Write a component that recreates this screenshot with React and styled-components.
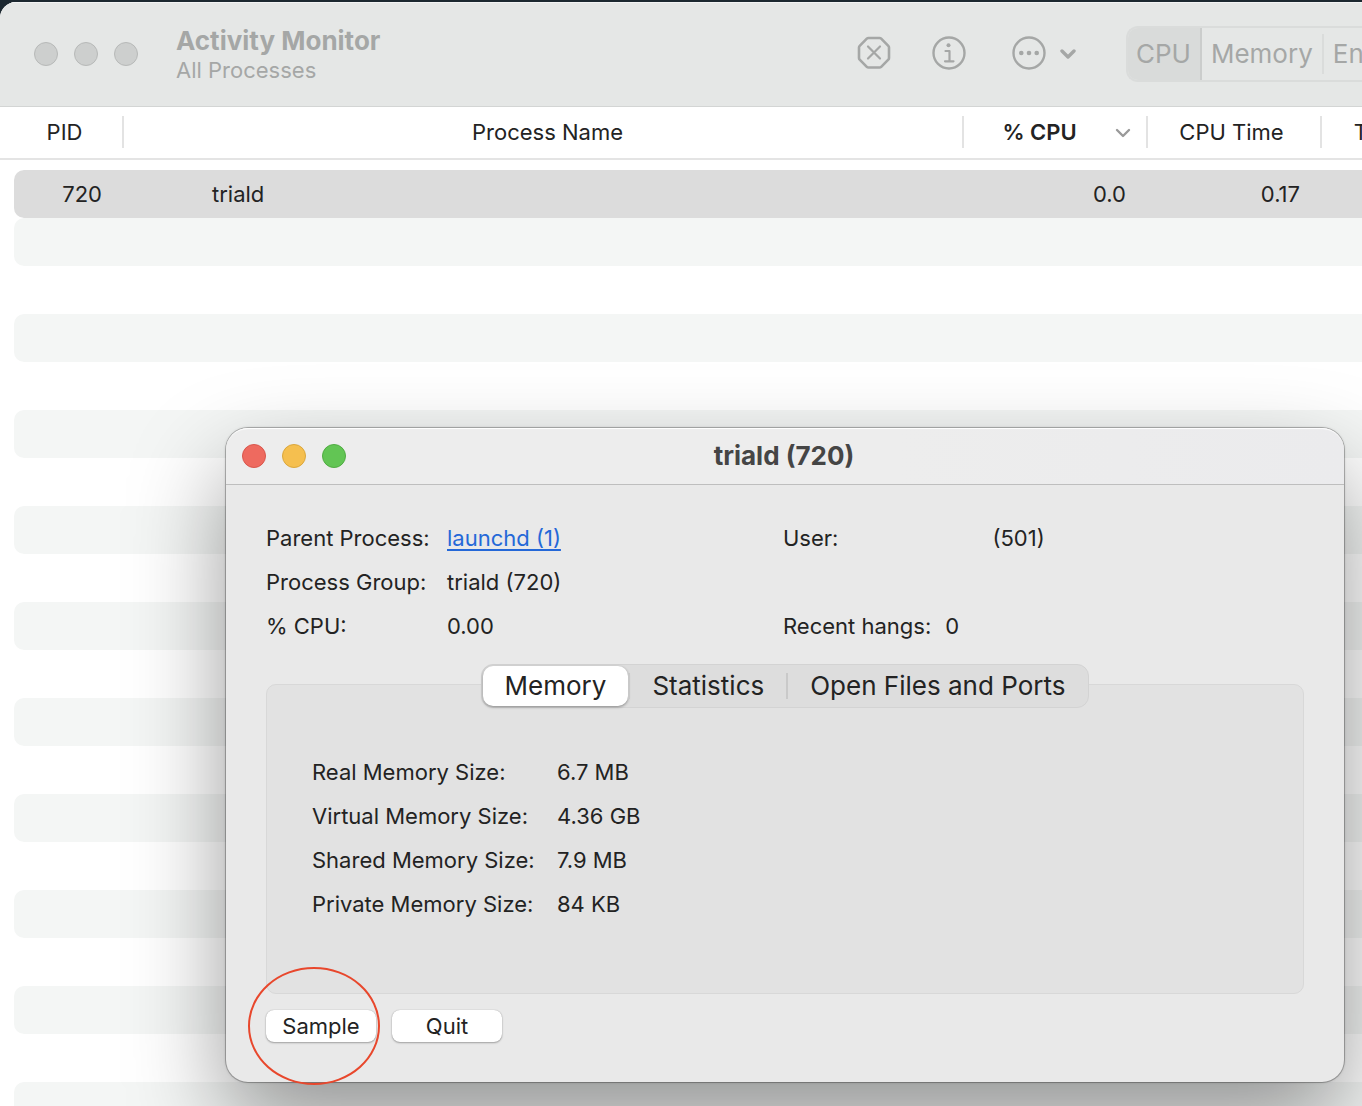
import { useState } from "react";
import styled, { createGlobalStyle, css } from "styled-components";

const GlobalStyle = createGlobalStyle`
	* {
		box-sizing: border-box;
	}

	body {
		margin: 0;
		background-color: #1c2830;
		color: #232323;
		font-family: Inter, "Liberation Sans", sans-serif;
		font-size: 22px;
		line-height: 28px;
	}

	button {
		border: 0;
		padding: 0;
		background: none;
		color: inherit;
		font: inherit;
	}
`;

const Desktop = styled.div`
	position: relative;
	height: 100vh;
	padding-top: 2px;
	overflow: hidden;
`;

const MainWindow = styled.main`
	min-height: 100%;
	background-color: #fff;
	border-top-left-radius: 16px;
	overflow: hidden;
`;

const Toolbar = styled.header`
	height: 105px;
	padding: 0 0 2px 34px;
	display: flex;
	align-items: center;
	background-color: #e5e7e6;
	border-top: 1px solid #f3f4f4;
	border-bottom: 1px solid #d3d5d4;
	color: #a5a7a6;
`;

const TrafficLights = styled.div`
	display: flex;
	gap: 16px;
`;

const Light = styled.button`
	width: 24px;
	height: 24px;
	border-radius: 50%;
	background-color: ${({ $color }) => $color};
	border: 1px solid ${({ $edge }) => $edge};
`;

const Titles = styled.div`
	margin-left: 38px;
	padding-top: 2px;
	flex: 1;
	white-space: nowrap;
`;

const WindowTitle = styled.h1`
	margin: 0;
	font-size: 26px;
	line-height: 30px;
	font-weight: 700;
`;

const Subtitle = styled.p`
	margin: 0;
`;

const Actions = styled.div`
	display: flex;
	align-items: center;
	margin-right: 50px;
	padding-bottom: 2px;
`;

const IconButton = styled.button`
	display: flex;
	align-items: center;
	gap: 14px;
	margin-left: ${({ $gap }) => $gap || 0}px;

	svg {
		display: block;
	}
`;

const ViewSwitch = styled.div`
	width: 236px;
	height: 56px;
	display: flex;
	align-items: center;
	border: 2px solid #dadcdb;
	border-right: 0;
	border-radius: 12px 0 0 12px;
	overflow: hidden;
	font-size: 26px;
`;

const ViewButton = styled.button`
	flex: none;
	height: 40px;
	padding: 0 9px;
	border-right: 2px solid #dadcdb;

	${({ $active }) =>
		$active &&
		css`
			height: 56px;
			padding: 0 9px 0 8px;
			background-color: #d9dbda;
			border-right-color: #cbcdcc;
		`}
`;

const ProcessTable = styled.table`
	width: calc(100% + 116px);
	table-layout: fixed;
	border-collapse: separate;
	border-spacing: 0;

	tbody::before {
		content: "";
		display: block;
		height: 10px;
	}
`;

const HeadCell = styled.th`
	width: ${({ $width }) => ($width ? `${$width}px` : "auto")};
	padding: 9px 0 10px;
	border-bottom: 2px solid #e4e4e4;
	font-weight: ${({ $sorted }) => ($sorted ? 600 : 400)};
`;

const HeadLabel = styled.div`
	height: 32px;
	display: flex;
	align-items: center;
	border-right: 2px solid #e3e3e3;
	padding-left: ${({ $left }) => $left || 0}px;
	padding-right: ${({ $right }) => $right || 0}px;

	span {
		flex: 1;
		text-align: center;
	}
`;

const Row = styled.tr`
	height: 48px;

	td {
		padding: 0 22px;
		background-color: ${({ $selected }) => ($selected ? "#dcdcdc" : "transparent")};
		text-align: right;
	}

	&:nth-child(even) td {
		background-color: #f4f6f5;
	}

	td:first-child {
		border-left: 14px solid transparent;
		border-radius: 24px 0 0 24px / 10px 0 0 10px;
		background-clip: padding-box;
	}

	td:nth-child(2) {
		padding-left: 88px;
		text-align: left;
	}
`;

const Dialog = styled.section`
	position: absolute;
	top: 428px;
	left: 226px;
	right: 18px;
	border-radius: 22px;
	background-color: #e9e9e9;
	box-shadow:
		0 0 0 1px rgba(0, 0, 0, 0.22),
		0 0 3px rgba(0, 0, 0, 0.25),
		0 42px 96px rgba(0, 0, 0, 0.4);
`;

const TitleBar = styled.header`
	height: 57px;
	padding: 0 18px 0 16px;
	display: grid;
	grid-template-columns: 1fr auto 1fr;
	align-items: center;
	border-radius: 22px 22px 0 0;
	background: linear-gradient(90deg, #ededed 60%, #ebebed);
	border-bottom: 1px solid #bebebe;
	box-shadow: inset 0 2px 1px -1px #fff;
`;

const DialogTitle = styled.h2`
	margin: 0;
	color: #454545;
	font-size: 26px;
	line-height: 30px;
	font-weight: 700;
`;

const DialogBody = styled.div`
	padding: 31px 40px 40px;
`;

const Summary = styled.div`
	display: grid;
	grid-template-columns: 517px 1fr;
`;

const Details = styled.dl`
	margin: 0;
	display: grid;
	grid-template-columns: ${({ $label }) => $label}px 1fr;
	grid-auto-rows: 44px;
	align-items: center;

	dt,
	dd {
		margin: 0;
		white-space: nowrap;
	}
`;

const InlineDetails = styled.dl`
	margin: 0;
	display: grid;
	grid-auto-rows: 44px;
	align-items: center;

	div {
		display: flex;
		gap: 14px;
	}

	dd {
		margin: 0;
	}
`;

// the account name is blank, only the uid follows it
const UserId = styled.dd`
	&& {
		padding-left: 140px;
	}
`;

const ParentLink = styled.a`
	color: #2468d8;
	text-underline-offset: 3px;
	text-decoration-thickness: 2px;
`;

const Tabs = styled.div`
	position: relative;
	width: fit-content;
	height: 44px;
	margin: 16px auto -24px;
	padding: 1px;
	display: flex;
	align-items: center;
	border: 1px solid #d3d3d3;
	border-radius: 12px;
	background-color: #dddddd;
	font-size: 26px;
`;

const Tab = styled.button`
	height: 26px;
	padding: 0 22px;
	display: flex;
	align-items: center;

	& + & {
		border-left: 2px solid #c9c9c9;
	}

	${({ $active }) =>
		$active &&
		css`
			height: 40px;
			border-radius: 10px;
			background-color: #fff;
			box-shadow: 0 1px 3px rgba(0, 0, 0, 0.4);

			& + button {
				border-left-color: transparent;
			}
		`}
`;

const Panel = styled.div`
	padding: 65px 45px 67px;
	border: 1px solid #d8d8d8;
	border-radius: 10px;
	background-color: #e2e2e2;
`;

const Footer = styled.footer`
	margin-top: 16px;
	display: flex;
	gap: 16px;
`;

const Marked = styled.div`
	position: relative;
`;

const Ring = styled.span`
	position: absolute;
	top: -43px;
	left: -18px;
	width: 132px;
	height: 118px;
	border: 2px solid #e8472c;
	border-radius: 50%;
	pointer-events: none;
`;

const PushButton = styled.button`
	display: block;
	width: 110px;
	height: 32px;
	border-radius: 8px;
	background-color: #fff;
	box-shadow:
		0 0 1px rgba(0, 0, 0, 0.3),
		0 1px 2px rgba(0, 0, 0, 0.3);
`;

const StopIcon = () => (
	<svg width="34" height="34" viewBox="0 0 34 34" fill="none" stroke="currentColor" strokeWidth="2.6" strokeLinecap="round" strokeLinejoin="round">
		<path d="M11.5 2h11q1 0 1.7.7l7.1 7.1q.7.7.7 1.7v10.5q0 1-.7 1.7l-7.1 7.1q-.7.7-1.7.7h-11q-1 0-1.7-.7L2.7 23.7q-.7-.7-.7-1.7V11.5q0-1 .7-1.7L9.8 2.7Q10.5 2 11.5 2z" />
		<path d="M11 10.500l12 12M23 10.500l-12 12" strokeWidth="2.2" />
	</svg>
);

const InfoIcon = () => (
	<svg width="34" height="34" viewBox="0 0 34 34" fill="none" stroke="currentColor" strokeLinecap="round" strokeLinejoin="round">
		<circle cx="17" cy="17" r="15.5" strokeWidth="2.4" />
		<circle cx="16.5" cy="9.3" r="2" fill="currentColor" stroke="none" />
		<path d="M13.5 15h4v10M13 25.300h8.500" strokeWidth="2.2" />
	</svg>
);

const MoreIcon = () => (
	<svg width="34" height="34" viewBox="0 0 34 34" fill="currentColor">
		<circle cx="17" cy="17" r="15.5" fill="none" stroke="currentColor" strokeWidth="2.4" />
		<circle cx="9.3" cy="17" r="2.3" />
		<circle cx="17" cy="17" r="2.3" />
		<circle cx="24.7" cy="17" r="2.3" />
	</svg>
);

const Chevron = ({ color = "currentColor", weight = 3 }) => (
	<svg width="16" height="12" viewBox="0 0 16 12" fill="none" stroke={color} strokeWidth={weight} strokeLinecap="round" strokeLinejoin="round">
		<path d="M2 4l6 6L14 4" />
	</svg>
);

const columns = [
	{ label: "PID", width: 124, left: 7 },
	{ label: "Process Name", left: 9 },
	{ label: "% CPU", width: 184, right: 15, sorted: true },
	{ label: "CPU Time", width: 174, right: 5 },
	{ label: "Threads", width: 156, right: 5 },
];

const views = ["CPU", "Memory", "Energy"];

const panels = {
	Memory: [
		["Real Memory Size:", "6.7 MB"],
		["Virtual Memory Size:", "4.36 GB"],
		["Shared Memory Size:", "7.9 MB"],
		["Private Memory Size:", "84 KB"],
	],
	Statistics: [],
	"Open Files and Ports": [],
};

const emptyRows = Array.from({ length: 19 }, (_, i) => i);

const Lights = ({ colors }) => (
	<TrafficLights>
		{["Close", "Minimize", "Zoom"].map((name, i) => (
			<Light key={name} aria-label={name} $color={colors[i][0]} $edge={colors[i][1]} />
		))}
	</TrafficLights>
);

const inactive = ["#cdcfce", "#b7b9b8"];

const ProcessInfo = () => {
	const [tab, setTab] = useState("Memory");

	return (
		<Dialog role="dialog" aria-labelledby="process-title">
			<TitleBar>
				<Lights
					colors={[
						["#ee6a5f", "#d9564c"],
						["#f5bf4f", "#dba73c"],
						["#62c554", "#50ac42"],
					]}
				/>
				<DialogTitle id="process-title">triald (720)</DialogTitle>
			</TitleBar>
			<DialogBody>
				<Summary>
					<Details $label={181}>
						<dt>Parent Process:</dt>
						<dd>
							<ParentLink href="#launchd">launchd (1)</ParentLink>
						</dd>
						<dt>Process Group:</dt>
						<dd>triald (720)</dd>
						<dt>% CPU:</dt>
						<dd>0.00</dd>
					</Details>
					<InlineDetails>
						<div>
							<dt>User:</dt>
							<UserId>(501)</UserId>
						</div>
						<div />
						<div>
							<dt>Recent hangs:</dt>
							<dd>0</dd>
						</div>
					</InlineDetails>
				</Summary>
				<Tabs role="tablist">
					{Object.keys(panels).map((name) => (
						<Tab
							key={name}
							role="tab"
							aria-selected={tab === name}
							$active={tab === name}
							onClick={() => setTab(name)}
						>
							{name}
						</Tab>
					))}
				</Tabs>
				<Panel role="tabpanel">
					<Details $label={245}>
						{panels[tab].map(([label, value]) => [
							<dt key={label}>{label}</dt>,
							<dd key={value}>{value}</dd>,
						])}
					</Details>
				</Panel>
				<Footer>
					<Marked>
						<PushButton>Sample</PushButton>
						<Ring />
					</Marked>
					<PushButton>Quit</PushButton>
				</Footer>
			</DialogBody>
		</Dialog>
	);
};

export default function App() {
	const [view, setView] = useState("CPU");

	return (
		<Desktop>
			<GlobalStyle />
			<MainWindow>
				<Toolbar>
					<Lights colors={[inactive, inactive, inactive]} />
					<Titles>
						<WindowTitle>Activity Monitor</WindowTitle>
						<Subtitle>All Processes</Subtitle>
					</Titles>
					<Actions>
						<IconButton aria-label="Stop process">
							<StopIcon />
						</IconButton>
						<IconButton aria-label="Process info" $gap={41}>
							<InfoIcon />
						</IconButton>
						<IconButton aria-label="More options" $gap={46}>
							<MoreIcon />
							<Chevron weight={3.4} />
						</IconButton>
					</Actions>
					<ViewSwitch>
						{views.map((name) => (
							<ViewButton key={name} $active={view === name} onClick={() => setView(name)}>
								{name}
							</ViewButton>
						))}
					</ViewSwitch>
				</Toolbar>
				<ProcessTable>
					<thead>
						<tr>
							{columns.map(({ label, width, left, right, sorted }) => (
								<HeadCell key={label} $width={width} $sorted={sorted}>
									<HeadLabel $left={left} $right={right}>
										<span>{label}</span>
										{sorted && <Chevron color="#9a9a9a" weight={2.4} />}
									</HeadLabel>
								</HeadCell>
							))}
						</tr>
					</thead>
					<tbody>
						<Row $selected>
							<td>720</td>
							<td>triald</td>
							<td>0.0</td>
							<td>0.17</td>
							<td />
						</Row>
						{emptyRows.map((row) => (
							<Row key={row}>
								<td />
								<td />
								<td />
								<td />
								<td />
							</Row>
						))}
					</tbody>
				</ProcessTable>
			</MainWindow>
			<ProcessInfo />
		</Desktop>
	);
}
